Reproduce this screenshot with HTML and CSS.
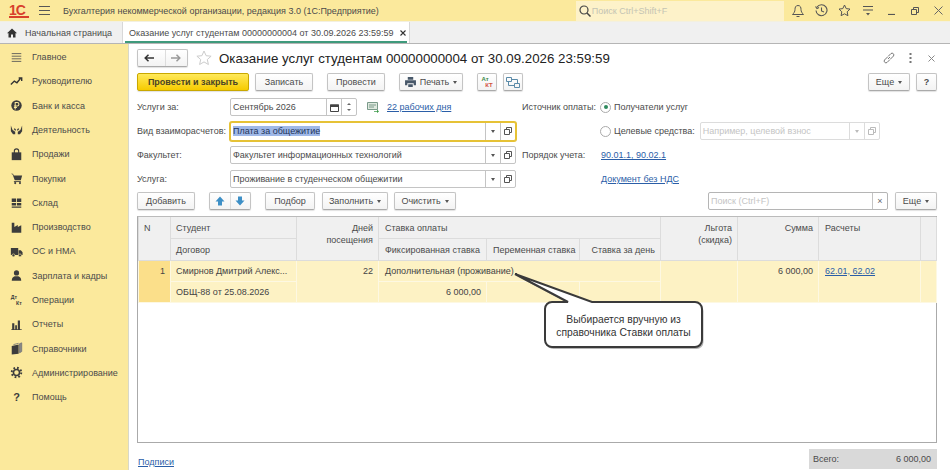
FILE: index.html
```html
<!DOCTYPE html>
<html lang="ru">
<head>
    <meta charset="UTF-8">
    <title>Оказание услуг студентам</title>
    <link rel="stylesheet" href="styles.css">
</head>
<body>
    <!-- Верхняя панель -->
    <header class="topbar">
        <span class="logo">1С</span>
        <svg class="burger" width="11" height="9" viewBox="0 0 11 9"><path d="M0 .5h11M0 4.500h11M0 8.500h11" stroke="#555" fill="none"/></svg>
        <span class="app-title">Бухгалтерия некоммерческой организации, редакция 3.0 (1С:Предприятие)</span>
        <div class="global-search">
            <svg width="12" height="12" viewBox="0 0 12 12"><circle cx="5" cy="5" r="4" fill="none" stroke="#444" stroke-width="1.200"/><path d="M8 8l3.500 3.500" stroke="#444" stroke-width="1.500"/></svg>
            <span>Поиск Ctrl+Shift+F</span>
        </div>
        <div class="top-icons">
            <svg width="12" height="14" viewBox="0 0 12 14"><path d="M6 1.500c-2.500 0-3 2-3 4s-1 3.500-2.500 5h11c-1.500-1.500-2.500-3-2.500-5s-.5-4-3-4zM4.500 12.500h3" fill="none" stroke="#555"/></svg>
            <svg width="13" height="13" viewBox="0 0 13 13"><path d="M2 3a5.500 5.500 0 1 1-1 3.500M.5 2.500L2 4.500 4 3.500M6.500 3.500v3.500l2.500 1" fill="none" stroke="#555" stroke-width="1.100"/></svg>
            <svg width="13" height="13" viewBox="0 0 13 13"><path d="M6.500 1l1.700 3.600 3.800.5-2.800 2.700.7 3.900-3.400-1.900-3.400 1.900.7-3.900L1 5.100l3.800-.5z" fill="none" stroke="#555"/></svg>
            <svg width="12" height="11" viewBox="0 0 12 11"><path d="M1 1.500h10M1 5h10" stroke="#555" fill="none"/><path d="M4 8h4l-2 2.500z" fill="#555"/></svg>
            <svg width="8" height="8" viewBox="0 0 8 8"><path d="M0 7.500h7" stroke="#555" stroke-width="1.200" fill="none"/></svg>
            <svg width="8" height="8" viewBox="0 0 8 8"><path d="M.5 2.500h5v5h-5zM2.500 2.500v-2h5v5h-2" fill="none" stroke="#555"/></svg>
            <svg width="9" height="9" viewBox="0 0 9 9"><path d="M.5.500l8 8M8.500.500l-8 8" stroke="#666" fill="none"/></svg>
        </div>
    </header>

    <!-- Вкладки -->
    <nav class="tabs">
        <div class="tab tab-home">
            <svg width="10" height="10" viewBox="0 0 10 10"><path d="M5 .5L0 5.200h1.500V9.500h2.500V6.500h2v3h2.500V5.200H10z" fill="#333"/></svg>
            <span>Начальная страница</span>
        </div>
        <div class="tab tab-active">
            <span>Оказание услуг студентам 00000000004 от 30.09.2026 23:59:59</span>
            <svg width="6" height="6" viewBox="0 0 6 6"><path d="M.5.500l5 5M5.500.500l-5 5" stroke="#333" stroke-width="1.100" fill="none"/></svg>
        </div>
    </nav>

    <div class="workspace">
        <!-- Меню разделов -->
        <aside class="sidebar">
            <a class="side-item"><svg viewBox="0 0 15 15"><path d="M2 3h11M2 6h11M2 9h11M2 12h11" stroke="#555" fill="none"/></svg>Главное</a>
            <a class="side-item"><svg viewBox="0 0 15 15"><path d="M1 11l4-4 3 2 4-5M10 3.500h3.500V7" stroke="#333" stroke-width="1.600" fill="none"/></svg>Руководителю</a>
            <a class="side-item"><svg viewBox="0 0 15 15"><circle cx="7.500" cy="7.500" r="6" fill="#3c3c3c"/><path d="M6 12V4h2.300a1.800 1.800 0 0 1 0 4H4.500M4.500 9.800h3.500" stroke="#fbe99b" stroke-width="1.200" fill="none"/></svg>Банк и касса</a>
            <a class="side-item"><svg viewBox="0 0 15 15"><path d="M1 3l2 5 3 2v3H3.500L1 9.500zM14 3l-2 5-3 2v3h2.500L14 9.500z" fill="#3c3c3c"/><path d="M5 6.500l1.500 2M10 6.500l-1.500 2" stroke="#3c3c3c" stroke-width="1.500"/></svg>Деятельность</a>
            <a class="side-item"><svg viewBox="0 0 15 15"><path d="M2 5h11v9H2z" fill="#3c3c3c"/><path d="M5 7V3.500a2.500 2.500 0 0 1 5 0V7" stroke="#3c3c3c" stroke-width="1.300" fill="none"/></svg>Продажи</a>
            <a class="side-item"><svg viewBox="0 0 15 15"><path d="M1 2h2.500l.8 2H14l-1.500 5.500H5.500L3 3" fill="#3c3c3c"/><path d="M4.500 11h8" stroke="#3c3c3c" fill="none"/><circle cx="6" cy="12.800" r="1.200" fill="#3c3c3c"/><circle cx="11.500" cy="12.800" r="1.200" fill="#3c3c3c"/></svg>Покупки</a>
            <a class="side-item"><svg viewBox="0 0 15 15"><path d="M2 3h5v4H2zM8 3h5v4H8zM2 8h5v3H2zM8 8h5v3H8zM2 12h11v1.500H2z" fill="#3c3c3c"/></svg>Склад</a>
            <a class="side-item"><svg viewBox="0 0 15 15"><path d="M2 2h3v5l4-2.500V7l4-2v8.500H2z" fill="#3c3c3c"/></svg>Производство</a>
            <a class="side-item"><svg viewBox="0 0 15 15"><path d="M1 3.500h8.500v8H1zM10 6h2.500L14.500 8.500v3H10z" fill="#3c3c3c"/><circle cx="4" cy="12" r="1.700" fill="#3c3c3c" stroke="#fbe99b" stroke-width=".7"/><circle cx="11.500" cy="12" r="1.700" fill="#3c3c3c" stroke="#fbe99b" stroke-width=".7"/></svg>ОС и НМА</a>
            <a class="side-item"><svg viewBox="0 0 15 15"><circle cx="7.500" cy="4.500" r="3" fill="#3c3c3c"/><path d="M2 13.500c0-3 2-4.500 3.500-5h4c1.500.5 3.500 2 3.500 5z" fill="#3c3c3c"/></svg>Зарплата и кадры</a>
            <a class="side-item"><svg viewBox="0 0 15 15"><text x="1" y="7" class="mini">Дт</text><text x="7" y="14" class="mini">Кт</text></svg>Операции</a>
            <a class="side-item"><svg viewBox="0 0 15 15"><path d="M2.500 6h2.500v7H2.500zM6 8.500h2v4.500H6zM9 3h2.500v10H9zM1.500 13h12v.8h-12z" fill="#3c3c3c"/></svg>Отчеты</a>
            <a class="side-item"><svg viewBox="0 0 15 15"><path d="M2 4.500l8-1.500v10.500l-8 1z" fill="#3c3c3c"/><path d="M11 2l2.500-1v10l-2.500 1.500zM4 3l6-1.500" stroke="#777" fill="#888"/></svg>Справочники</a>
            <a class="side-item"><svg viewBox="0 0 15 15"><circle cx="7.500" cy="7.500" r="3.500" fill="none" stroke="#3c3c3c" stroke-width="1.800"/><circle cx="7.500" cy="7.500" r="5.500" fill="none" stroke="#3c3c3c" stroke-width="2.200" stroke-dasharray="2 2.320"/></svg>Администрирование</a>
            <a class="side-item"><span class="side-help">?</span>Помощь</a>
        </aside>

        <main class="main">
            <!-- Заголовок формы -->
            <div class="title-row">
                <div class="btn nav-btn">
                    <span class="nav-part"><svg width="10" height="8" viewBox="0 0 10 8"><path d="M10 4H2M4.500 .8L1.200 4l3.300 3.200" fill="none" stroke="#333" stroke-width="1.500"/></svg></span>
                    <span class="nav-part"><svg width="10" height="8" viewBox="0 0 10 8"><path d="M0 4h8M5.500 .8L8.800 4 5.500 7.200" fill="none" stroke="#999" stroke-width="1.500"/></svg></span>
                </div>
                <svg class="fav" width="16" height="16" viewBox="0 0 16 16"><path d="M8 1l2.100 4.700 5 .5-3.800 3.300 1.100 5L8 11.900l-4.400 2.600 1.100-5L.9 6.200l5-.5z" fill="none" stroke="#ccc"/></svg>
                <h1 class="doc-title">Оказание услуг студентам 00000000004 от 30.09.2026 23:59:59</h1>
                <div class="title-tools">
                    <svg width="12" height="12" viewBox="0 0 12 12"><path d="M5 7l2-2M4.500 5L1.500 8a1.800 1.800 0 0 0 2.500 2.500L7 7.500M7.500 7l3-3A1.800 1.800 0 0 0 8 1.500L5 4.500" fill="none" stroke="#777"/></svg>
                    <svg width="3" height="10" viewBox="0 0 3 10"><path d="M.5 0h2v2h-2zM.5 4h2v2h-2zM.5 8h2v2h-2z" fill="#777"/></svg>
                    <svg width="7" height="7" viewBox="0 0 7 7"><path d="M.5.500l6 6M6.500.500l-6 6" stroke="#888" fill="none"/></svg>
                </div>
            </div>

            <!-- Команды -->
            <div class="commands">
                <button class="btn btn-primary">Провести и закрыть</button>
                <button class="btn w-58">Записать</button>
                <button class="btn w-58 gap-big">Провести</button>
                <button class="btn btn-menu w-64 gap-big"><svg width="11" height="10" viewBox="0 0 12 11"><path d="M3 0h6v3H3zM0 3.500h12V9H9.500V7h-7v2H0zM3.500 8h5v3h-5z" fill="#48586a"/></svg>Печать<i class="caret"></i></button>
                <button class="btn gap-big btn-icon dtkt"><span class="dt">Ат</span><span class="kt">КТ</span></button>
                <button class="btn btn-icon"><svg width="14" height="13" viewBox="0 0 14 13"><path d="M.5 1.500h5v4h-5zM8.500 7.500h5v4h-5zM5.500 3.500h6v4M8.500 9.500h-6v-4" fill="none" stroke="#5a8aa8"/></svg></button>
                <button class="btn btn-menu w-42 push-right">Еще<i class="caret"></i></button>
                <button class="btn btn-help">?</button>
            </div>

            <!-- Реквизиты -->
            <div class="fields">
                <label>Услуги за:</label>
                <div class="field-line">
                    <div class="input input-date">
                        <span class="input-text">Сентябрь 2026</span>
                        <span class="cell"><svg width="9" height="9" viewBox="0 0 9 9"><path d="M.5 2h8v6.500h-8z" fill="none" stroke="#444"/><path d="M0 1.500h9V4H0z" fill="#444"/></svg></span>
                        <span class="spin"><i class="spin-up"></i><i class="spin-down"></i></span>
                    </div>
                    <svg class="days-icon" width="12" height="11" viewBox="0 0 12 11"><path d="M.5 .5h10v7H.5z" fill="#dfe9df" stroke="#7a9a8a"/><path d="M2 3h7M2 5h5" stroke="#7a9a8a"/><path d="M7 9h3V7.500L12 9.500 10 11V9.800H7z" fill="#3d9a4a"/></svg>
                    <a class="link">22 рабочих дня</a>
                </div>
                <label>Источник оплаты:</label>
                <div class="radio-line"><i class="radio radio-on"></i>Получатели услуг</div>

                <label>Вид взаиморасчетов:</label>
                <div class="input input-wide input-focus">
                    <span class="input-text"><mark>Плата за общежитие</mark></span>
                    <span class="cell"><i class="caret"></i></span>
                    <span class="cell"><svg class="open-icon" viewBox="0 0 8 8"><path d="M.5 2.500h5v5h-5zM2.500 2.500v-2h5v5h-2" fill="none" stroke="#555"/></svg></span>
                </div>
                <div class="radio-line radio-span">
                    <i class="radio"></i>Целевые средства:
                    <div class="input input-off">
                        <span class="input-text">Например, целевой взнос</span>
                        <span class="cell"><i class="caret"></i></span>
                        <span class="cell"><svg class="open-icon" viewBox="0 0 8 8"><path d="M.5 2.500h5v5h-5zM2.500 2.500v-2h5v5h-2" fill="none" stroke="#bbb"/></svg></span>
                    </div>
                </div>

                <label>Факультет:</label>
                <div class="input input-wide">
                    <span class="input-text">Факультет информационных технологий</span>
                    <span class="cell"><i class="caret"></i></span>
                    <span class="cell"><svg class="open-icon" viewBox="0 0 8 8"><path d="M.5 2.500h5v5h-5zM2.500 2.500v-2h5v5h-2" fill="none" stroke="#555"/></svg></span>
                </div>
                <label>Порядок учета:</label>
                <a class="link">90.01.1, 90.02.1</a>

                <label>Услуга:</label>
                <div class="input input-wide">
                    <span class="input-text">Проживание в студенческом общежитии</span>
                    <span class="cell"><i class="caret"></i></span>
                    <span class="cell"><svg class="open-icon" viewBox="0 0 8 8"><path d="M.5 2.500h5v5h-5zM2.500 2.500v-2h5v5h-2" fill="none" stroke="#555"/></svg></span>
                </div>
                <span></span>
                <a class="link">Документ без НДС</a>
            </div>

            <!-- Команды таблицы -->
            <div class="commands table-commands">
                <button class="btn w-58">Добавить</button>
                <div class="btn arrows gap-big">
                    <span><svg width="10" height="10" viewBox="0 0 10 10"><path d="M5 .5L.5 5.500H3V9.500h4V5.500h2.500z" fill="#3d8fc6"/></svg></span>
                    <span><svg width="10" height="10" viewBox="0 0 10 10"><path d="M5 9.500L.5 4.500H3V.5h4v4h2.500z" fill="#3d8fc6"/></svg></span>
                </div>
                <button class="btn w-50 gap-big">Подбор</button>
                <button class="btn btn-menu w-66 gap-small">Заполнить<i class="caret"></i></button>
                <button class="btn btn-menu w-62">Очистить<i class="caret"></i></button>
                <div class="input table-search">
                    <span class="input-text">Поиск (Ctrl+F)</span>
                    <span class="cell cell-x">×</span>
                </div>
                <button class="btn btn-menu w-42 gap-small">Еще<i class="caret"></i></button>
            </div>

            <!-- Таблица -->
            <div class="grid-box">
                <table class="grid">
                    <colgroup>
                        <col class="c-n"><col class="c-student"><col class="c-days"><col class="c-fix"><col class="c-var"><col class="c-day"><col class="c-lgota"><col class="c-sum"><col class="c-calc"><col class="c-end">
                    </colgroup>
                    <thead>
                        <tr class="h1">
                            <th rowspan="2" class="tight">N</th>
                            <th class="tight">Студент</th>
                            <th rowspan="2" class="num">Дней<br>посещения</th>
                            <th colspan="3">Ставка оплаты</th>
                            <th rowspan="2" class="num">Льгота<br>(скидка)</th>
                            <th rowspan="2" class="num">Сумма</th>
                            <th rowspan="2">Расчеты</th>
                            <th rowspan="2"></th>
                        </tr>
                        <tr class="h2">
                            <th class="tight">Договор</th>
                            <th>Фиксированная ставка</th>
                            <th>Переменная ставка</th>
                            <th class="num">Ставка за день</th>
                        </tr>
                    </thead>
                    <tbody>
                        <tr>
                            <td rowspan="2" class="num cell-n">1</td>
                            <td class="tight">Смирнов Дмитрий Алекс...</td>
                            <td rowspan="2" class="num">22</td>
                            <td colspan="3">Дополнительная (проживание)</td>
                            <td rowspan="2"></td>
                            <td rowspan="2" class="num">6 000,00</td>
                            <td rowspan="2"><a class="link">62.01, 62.02</a></td>
                            <td rowspan="2"></td>
                        </tr>
                        <tr>
                            <td class="tight">ОБЩ-88 от 25.08.2026</td>
                            <td class="num">6 000,00</td>
                            <td></td>
                            <td></td>
                        </tr>
                    </tbody>
                </table>
            </div>

            <div class="form-footer">
                <a class="link">Подписи</a>
                <div class="total"><span>Всего:</span><span>6 000,00</span></div>
            </div>
        </main>
    </div>

    <!-- Выноска поверх таблицы -->
    <div class="callout">
        <svg width="200" height="84" viewBox="0 0 200 84">
            <path d="M1 3L54 31H38a7 7 0 0 0-7 7v31a7 7 0 0 0 7 7h143a7 7 0 0 0 7-7V38a7 7 0 0 0-7-7H78z" transform="translate(1.500 2)" fill="#777" opacity=".55"/>
            <path d="M1 3L54 31H38a7 7 0 0 0-7 7v31a7 7 0 0 0 7 7h143a7 7 0 0 0 7-7V38a7 7 0 0 0-7-7H78z" fill="#fff" stroke="#3a3a3a" stroke-width="2"/>
        </svg>
        <p class="callout-text">Выбирается вручную из<br>справочника Ставки оплаты</p>
    </div>
</body>
</html>
```

FILE: styles.css
```css
* {
    box-sizing: border-box;
}

html, body {
    width: 950px;
    height: 470px;
}

body {
    margin: 0;
    overflow: hidden;
    position: relative;
    font-family: "Liberation Sans", Arial, sans-serif;
    font-size: 9px;
    color: #4b4b4b;
    background: #fff;
}

/* Верхняя панель */
.topbar {
    height: 22px;
    display: flex;
    align-items: center;
    background: #fbe99c;
    border-bottom: 1px solid #f3f0e0;
}

.logo {
    width: 20px;
    margin-left: 9px;
    color: #d8402c;
    font-size: 14px;
    font-weight: bold;
    line-height: 12px;
    letter-spacing: -1px;
    border-bottom: 2px solid #d8402c;
}

.burger {
    margin-left: 10px;
}

.app-title {
    margin-left: 13px;
    width: 514px;
}

.global-search {
    width: 209px;
    height: 20px;
    display: flex;
    align-items: center;
    gap: 1px;
    padding-left: 3px;
    background: #fdf2c9;
    color: #c4c4b4;
}

.top-icons {
    display: grid;
    grid-template-columns: repeat(7, 23.400px);
    justify-items: center;
    align-items: center;
    margin-left: 2px;
}

/* Вкладки */
.tabs {
    height: 22px;
    display: flex;
    background: #f0f0f0;
    border-bottom: 1px solid #b5b5b5;
}

.tab {
    display: flex;
    align-items: center;
    white-space: nowrap;
}

.tab-home {
    width: 122px;
    gap: 8px;
    padding-left: 7px;
}

.tab-active {
    width: 288px;
    padding: 0 0 0 6px;
    gap: 6px;
    background: #fff;
    position: relative;
    border-left: 1px solid #d8d8d8;
    border-right: 1px solid #d8d8d8;
}

.tab-active::after {
    content: "";
    position: absolute;
    left: 2px;
    right: 2px;
    bottom: 0;
    height: 2px;
    background: #3f9a7c;
}

.workspace {
    display: flex;
    height: 426px;
}

/* Меню разделов */
.sidebar {
    width: 129px;
    flex: none;
    padding-top: 1px;
    background: #fbe99c;
    border-right: 1px solid #d8d8c8;
}

.side-item {
    height: 24.290px;
    display: flex;
    align-items: center;
    gap: 9px;
    padding-left: 10px;
}

.side-item svg {
    width: 13px;
    height: 13px;
    flex: none;
}

.mini {
    font-size: 6px;
    font-weight: bold;
    fill: #3c3c3c;
}

.side-help {
    width: 13px;
    text-align: center;
    font-size: 11px;
    font-weight: bold;
    color: #3c3c3c;
}

/* Основная часть */
.main {
    flex: 1;
    min-width: 0;
    padding: 5px 13px 0 8px;
}

.title-row {
    height: 18px;
    display: flex;
    align-items: center;
    margin-bottom: 6px;
}

.nav-btn {
    width: 51px;
    height: 18px;
    padding: 0;
    gap: 0;
}

.nav-part {
    flex: 1;
    height: 100%;
    display: flex;
    align-items: center;
    justify-content: center;
}

.nav-part + .nav-part {
    border-left: 1px solid #ddd;
}

.fav {
    margin-left: 8px;
}

.doc-title {
    margin: 0 0 0 7px;
    font-size: 13.300px;
    font-weight: normal;
    color: #222;
}

.title-tools {
    margin-left: auto;
    display: flex;
    align-items: center;
    gap: 14px;
    padding-right: 2px;
}

.title-tools svg:last-child {
    margin-left: 2px;
}

/* Кнопки */
.commands {
    height: 19px;
    display: flex;
    align-items: flex-start;
}

.btn {
    height: 18px;
    display: inline-flex;
    align-items: center;
    justify-content: center;
    gap: 5px;
    padding: 0;
    border: 1px solid #c4c4c4;
    border-bottom-color: #aaa;
    border-radius: 2px;
    background: linear-gradient(#fff, #f3f3f3);
    box-shadow: 0 1px 1px rgba(0, 0, 0, 0.12);
    font: inherit;
    color: #4b4b4b;
    white-space: nowrap;
}

.commands > .btn + .btn {
    margin-left: 6px;
}

.commands > .btn.gap-big {
    margin-left: 14px;
}

.commands > .btn.gap-small {
    margin-left: 7px;
}

.commands > .btn.push-right {
    margin-left: auto;
}

.btn-menu {
    gap: 4px;
}

.w-42 { width: 42px; }
.w-50 { width: 50px; }
.w-58 { width: 58px; }
.w-62 { width: 62px; }
.w-64 { width: 64px; }
.w-66 { width: 66px; }

.btn-primary {
    width: 112px;
    border-color: #c9a800;
    background: linear-gradient(#ffe95a, #f6cb00);
    font-weight: bold;
    color: #4a4426;
}

.btn-icon {
    width: 20px;
}

.btn-help {
    width: 21px;
    font-weight: bold;
}

.dtkt {
    flex-direction: column;
    gap: 0;
    font-size: 6px;
    font-weight: bold;
    line-height: 6px;
}

.dt {
    color: #3d8a4a;
    margin-right: 4px;
}

.kt {
    color: #d2503c;
    margin-left: 4px;
}

.caret {
    width: 0;
    height: 0;
    display: inline-block;
    border-left: 2.500px solid transparent;
    border-right: 2.500px solid transparent;
    border-top: 3px solid #555;
}

/* Реквизиты */
.fields {
    margin-top: 3px;
    display: grid;
    grid-template-columns: 93px 292px 79px 1fr;
    grid-auto-rows: 24px;
    align-items: center;
}

.fields > label {
    white-space: nowrap;
}

.field-line {
    display: flex;
    align-items: center;
}

.input {
    height: 18px;
    display: flex;
    align-items: stretch;
    border: 1px solid #c4c4c4;
    border-radius: 2px;
    background: #fff;
    color: #4b4b4b;
}

.input-text {
    flex: 1;
    min-width: 0;
    padding-left: 2px;
    line-height: 16px;
    white-space: nowrap;
}

.cell {
    flex: none;
    width: 15px;
    display: flex;
    align-items: center;
    justify-content: center;
    border-left: 1px solid #c4c4c4;
}

.input-wide {
    width: 286px;
}

.input-focus {
    height: 19px;
    border-color: #e6c236;
    box-shadow: 0 0 0 1px #e6c236;
}

.input-focus mark {
    background: #9fb8e8;
    color: #22345a;
}

.input-date {
    width: 127px;
}

.spin {
    flex: none;
    width: 15px;
    display: flex;
    flex-direction: column;
    align-items: center;
    justify-content: space-evenly;
    border-left: 1px solid #c4c4c4;
}

.spin i {
    width: 0;
    height: 0;
    border-left: 2px solid transparent;
    border-right: 2px solid transparent;
}

.spin-up {
    border-bottom: 2px solid #666;
}

.spin-down {
    border-top: 2px solid #666;
}

.open-icon {
    width: 8px;
    height: 8px;
}

.days-icon {
    margin-left: 10px;
}

.field-line .link {
    margin-left: 8px;
}

.link {
    color: #2b5ea7;
    text-decoration: underline;
    white-space: nowrap;
}

.radio-line {
    display: flex;
    align-items: center;
    white-space: nowrap;
}

.radio-span {
    grid-column: 4;
}

.radio {
    width: 11px;
    height: 11px;
    margin: 0 3px 0 -1px;
    flex: none;
    border: 1px solid #aaa;
    border-radius: 50%;
    background: #fff;
    position: relative;
}

.radio-on::after {
    content: "";
    position: absolute;
    left: 2.500px;
    top: 2.500px;
    width: 4px;
    height: 4px;
    border-radius: 50%;
    background: #2f8a5e;
}

.input-off {
    width: 180px;
    margin-left: 5px;
    border-color: #dcdcdc;
    color: #c4c4c4;
}

.input-off .cell {
    border-color: #dcdcdc;
}

.input-off .caret {
    border-top-color: #bbb;
}

/* Команды таблицы */
.table-commands {
    margin-top: 1px;
    height: 19px;
}

.arrows {
    width: 42px;
    gap: 0;
}

.arrows span {
    flex: 1;
    height: 100%;
    display: flex;
    align-items: center;
    justify-content: center;
}

.arrows span + span {
    border-left: 1px solid #ddd;
}

.table-search {
    width: 180px;
    margin-left: auto;
    border-color: #b5b5b5;
    color: #c4c4c4;
}

.cell-x {
    color: #666;
}

/* Таблица */
.grid-box {
    margin-top: 5px;
    height: 227px;
    border: 1px solid #aaa;
    border-top-color: #bbb;
}

.grid {
    width: 798px;
    table-layout: fixed;
    border-collapse: collapse;
}

.c-n { width: 32px; }
.c-student { width: 126px; }
.c-days { width: 82px; }
.c-fix { width: 108px; }
.c-var { width: 93px; }
.c-day { width: 81px; }
.c-lgota { width: 77px; }
.c-sum { width: 81px; }
.c-calc { width: 102px; }
.c-end { width: 16px; }

.grid th {
    padding: 5px 5px 0 6px;
    background: #f0f0f0;
    border: 1px solid #dcdcdc;
    border-top: none;
    font-weight: normal;
    text-align: left;
    vertical-align: top;
    line-height: 12px;
    white-space: nowrap;
}

.grid th.num,
.grid td.num {
    text-align: right;
}

.h1 {
    height: 21px;
}

.h2 {
    height: 22px;
}

.grid tbody tr {
    height: 20px;
}

.grid td {
    padding: 0 5px 0 6px;
    background: #fdf2c4;
    border: 1px solid #fdf8e2;
    border-top: none;
    color: #444;
    white-space: nowrap;
    vertical-align: top;
    line-height: 20px;
    overflow: hidden;
}

.grid th.tight,
.grid td.tight {
    padding-left: 5px;
}

.grid td.cell-n {
    background: #fbdf8a;
}

/* Низ формы */
.form-footer {
    margin-top: 6px;
    height: 20px;
    display: flex;
    justify-content: space-between;
    align-items: flex-end;
}

.form-footer .link {
    margin-left: 1px;
    line-height: 13px;
}

.total {
    width: 128px;
    height: 20px;
    display: flex;
    justify-content: space-between;
    align-items: center;
    padding: 0 6px 0 4px;
    background: #d9d9d9;
}

/* Выноска */
.callout {
    position: absolute;
    left: 514px;
    top: 271px;
    width: 200px;
    height: 84px;
}

.callout svg {
    display: block;
}

.callout-text {
    position: absolute;
    left: 31px;
    top: 42px;
    width: 157px;
    margin: 0;
    text-align: center;
    font-size: 10.300px;
    line-height: 13px;
    color: #333;
}
```
